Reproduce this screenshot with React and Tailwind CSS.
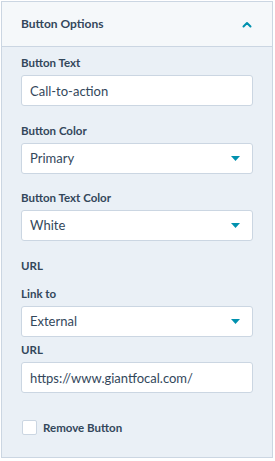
import React, { useState } from "react";

const font = { fontFamily: '"Lato", "Noto Sans", sans-serif' };

const Caret = () => (
  <svg width="9" height="5" viewBox="0 0 9 5" className="shrink-0">
    <path d="M0 0 H9 L4.5 5 Z" fill="#0091ae" />
  </svg>
);

const Label = ({ children }) => (
  <label className="block h-4 leading-4 text-[11.5px] font-bold text-[#33475b] mb-[4px]">
    {children}
  </label>
);

const TextField = ({ value, onChange }) => (
  <input
    type="text"
    value={value}
    onChange={(e) => onChange(e.target.value)}
    className="block w-full h-[31px] px-[8px] bg-white border border-[#cbd6e2] rounded-[3px] text-[13px] text-[#33475b] focus:outline-none"
  />
);

const SelectField = ({ value }) => (
  <div className="flex items-center justify-between w-full h-[31px] pl-[8px] pr-[12px] bg-white border border-[#cbd6e2] rounded-[3px] text-[13px] text-[#33475b]">
    <span>{value}</span>
    <Caret />
  </div>
);

const App = () => {
  const [buttonText, setButtonText] = useState("Call-to-action");
  const [url, setUrl] = useState("https://www.giantfocal.com/");
  const [removeButton, setRemoveButton] = useState(false);

  return (
    <div className="w-[275px] h-[461px] bg-white pt-px pl-px" style={font}>
      <div className="w-[272px] border border-[#cbd6e2] bg-[#eaf0f6]">
        <div className="flex items-center justify-between h-[45px] pl-[19px] pr-[20px] bg-[#f5f8fa] border-b border-[#cbd6e2]">
          <span className="text-[12px] font-bold text-[#33475b]">Button Options</span>
          <svg width="10" height="7" viewBox="0 0 10 7">
            <path
              d="M1.5 5.5 L5 2 L8.5 5.5"
              fill="none"
              stroke="#0091ae"
              strokeWidth="2"
              strokeLinecap="round"
              strokeLinejoin="round"
            />
          </svg>
        </div>

        <div className="px-[19px] pt-[8px] pb-[21px]">
          <div>
            <Label>Button Text</Label>
            <TextField value={buttonText} onChange={setButtonText} />
          </div>

          <div className="mt-[17px]">
            <Label>Button Color</Label>
            <SelectField value="Primary" />
          </div>

          <div className="mt-[16px]">
            <Label>Button Text Color</Label>
            <SelectField value="White" />
          </div>

          <div className="mt-[17px] h-4 leading-4 text-[11.5px] font-bold text-[#33475b]">URL</div>

          <div className="mt-[12px]">
            <Label>Link to</Label>
            <SelectField value="External" />
          </div>

          <div className="mt-[5px]">
            <Label>URL</Label>
            <TextField value={url} onChange={setUrl} />
          </div>

          <label className="flex items-center gap-[6px] mt-[26px] cursor-pointer">
            <input
              type="checkbox"
              checked={removeButton}
              onChange={(e) => setRemoveButton(e.target.checked)}
              className="appearance-none w-[15px] h-[15px] bg-white border border-[#cbd6e2] rounded-[2px] ml-[1px] checked:bg-[#0091ae]"
            />
            <span className="text-[11.5px] font-bold text-[#33475b]">Remove Button</span>
          </label>
        </div>
      </div>
    </div>
  );
};

export default App;
